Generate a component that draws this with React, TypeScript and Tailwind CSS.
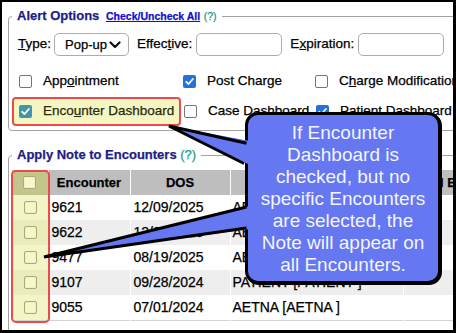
import React from "react";

function Box({ checked = false, tone = "normal" }: { checked?: boolean; tone?: "normal" | "teal" }) {
  if (checked) {
    return (
      <span
        className={`inline-flex w-[13px] h-[13px] shrink-0 items-center justify-center rounded-[2px] ${
          tone === "teal" ? "bg-[#4595a8]" : "bg-[#2273da]"
        }`}
      >
        <svg width="11" height="11" viewBox="0 0 11 11">
          <path d="M2.2 5.8 L4.5 8 L8.9 3" fill="none" stroke="#fff" strokeWidth="1.8" strokeLinecap="round" strokeLinejoin="round" />
        </svg>
      </span>
    );
  }
  return <span className="inline-block w-[13px] h-[13px] shrink-0 rounded-[2px] border border-[#767676] bg-white" />;
}

function YBox() {
  return <span className="inline-block w-[13px] h-[13px] rounded-[2px] border border-[#a9aa74] bg-[#f6f8cc] shadow-[inset_0_0_1px_#c9ca92]" />;
}

const rows = [
  { enc: "9621", dos: "12/09/2025", ins: "AETNA [AETNA ]" },
  { enc: "9622", dos: "12/08/2025", ins: "AETNA [AETNA ]" },
  { enc: "9477", dos: "08/19/2025", ins: "AETNA [AETNA ]" },
  { enc: "9107", dos: "09/28/2024", ins: "PATIENT [PATIENT ]" },
  { enc: "9055", dos: "07/01/2024", ins: "AETNA [AETNA ]" },
];

export default function App() {
  return (
    <div className="w-[456px] h-[333px] bg-black pt-[2px] pl-[2px] pr-[3px] pb-[3px]">
      <div className="relative w-full h-full bg-white overflow-hidden font-['Liberation_Sans',Arial,sans-serif] text-[13.5px] text-black">
        <div className="pt-[5px] pl-[6px] [-webkit-text-stroke:0.25px]">
          {/* Alert Options */}
          <fieldset className="w-[460px] border border-[#a3a3a3] rounded-[4px] pl-[3px] pb-[4px]">
            <legend className="ml-0 px-[5px] text-[13px] leading-[18px] whitespace-nowrap">
              <span className="font-bold text-[#1d1d86]">Alert Options</span>{" "}
              <span className="ml-[3px] text-[10.5px] font-bold text-[#1010d0] underline">Check/Uncheck All</span>{" "}
              <span className="text-[10.5px] text-[#1a9a82]">(?)</span>
            </legend>
            <div className="mt-[8px] flex items-center h-[23px] pl-[6px]">
              <span>
                <u>T</u>ype:
              </span>
              <div className="ml-[3px] w-[75px] h-[23px] rounded-[5px] border border-[#acacac] flex items-center justify-between pl-[10px] pr-[7px]">
                <span className="text-[13px]">Pop-up</span>
                <svg width="12" height="8" viewBox="0 0 12 8">
                  <path d="M1.5 1.5 L6 6 L10.5 1.5" fill="none" stroke="#111" strokeWidth="2.2" strokeLinecap="round" strokeLinejoin="round" />
                </svg>
              </div>
              <span className="ml-[8px]">
                Effec<u>t</u>ive:
              </span>
              <div className="ml-[4px] w-[86px] h-[23px] rounded-[5px] border border-[#acacac] bg-white" />
              <span className="ml-[8px]">
                E<u>x</u>piration:
              </span>
              <div className="ml-[4px] w-[86px] h-[23px] rounded-[5px] border border-[#acacac] bg-white" />
            </div>

            <div className="mt-[13px] grid grid-cols-[169px_132px_1fr] items-center">
              <div className="h-[24px] flex items-center pl-[7px]">
                <Box />
                <span className="ml-[11px]">
                  App<u>o</u>intment
                </span>
              </div>
              <div className="h-[24px] flex items-center pl-[2px]">
                <Box checked />
                <span className="ml-[11px]">Post Charge</span>
              </div>
              <div className="h-[24px] flex items-center pl-[2px] whitespace-nowrap">
                <Box />
                <span className="ml-[11px]">
                  C<u>h</u>arge Modification
                </span>
              </div>

              <div className="mt-[4px] h-[29px] flex items-center pl-[5px] border-2 border-[#ef4a4a] rounded-[4px] bg-[#f4f7c1]">
                <Box checked tone="teal" />
                <span className="ml-[11px] text-[#2a2a12] whitespace-nowrap">
                  Enco<u>u</u>nter Dashboard
                </span>
              </div>
              <div className="mt-[4px] h-[29px] flex items-center pl-[3px] whitespace-nowrap">
                <Box />
                <span className="ml-[11px]">Case Dashboard</span>
              </div>
              <div className="mt-[4px] h-[29px] flex items-center pl-[3px] whitespace-nowrap">
                <Box checked />
                <span className="ml-[11px]">Patient Dashboard</span>
              </div>
            </div>
          </fieldset>

          {/* Apply Note to Encounters */}
          <fieldset className="mt-[15px] w-[460px] border border-[#a3a3a3] rounded-[4px] pl-[3px] pb-[20px]">
            <legend className="px-[5px] text-[13px] leading-[18px] whitespace-nowrap">
              <span className="font-bold text-[#1d1d86]">Apply Note to Encounters</span>{" "}
              <span className="text-[#1a9a82]">(?)</span>
            </legend>
            <div className="relative mt-[6px]">
              <table className="table-fixed border-collapse w-[460px] text-[14px]">
                <colgroup>
                  <col className="w-[36px]" />
                  <col className="w-[82px]" />
                  <col className="w-[100px]" />
                  <col className="w-[173px]" />
                  <col />
                </colgroup>
                <thead>
                  <tr className="h-[25px] bg-[#bebebe] text-[13px] font-bold">
                    <th className="p-0 bg-[#c4c58a] text-center">
                      <div className="flex justify-center">
                        <YBox />
                      </div>
                    </th>
                    <th className="p-0 border-l border-white text-center">Encounter</th>
                    <th className="p-0 border-l border-white text-center">DOS</th>
                    <th className="p-0 border-l border-white text-center">Insurance</th>
                    <th className="p-0 pl-[10px] border-l border-white text-left whitespace-nowrap">Total Balance</th>
                  </tr>
                </thead>
                <tbody className="border-b border-[#d4d4d4]">
                  {rows.map((r, i) => (
                    <tr key={r.enc} className={`h-[25px] ${i % 2 === 1 ? "bg-[#eeeeee]" : "bg-white"}`}>
                      <td className={`p-0 ${i % 2 === 1 ? "bg-[#eaedbb]" : "bg-[#f2f5c6]"}`}>
                        <div className="flex justify-center pl-[1px]">
                          <YBox />
                        </div>
                      </td>
                      <td className="p-0 pl-[3px] border-l border-white">{r.enc}</td>
                      <td className="p-0 pl-[3px] border-l border-white">{r.dos}</td>
                      <td className="p-0 pl-[2px] border-l border-white whitespace-nowrap">{r.ins}</td>
                      <td className="p-0 border-l border-white" />
                    </tr>
                  ))}
                </tbody>
              </table>
              <div className="absolute left-[-1px] top-0 w-[39px] h-[153px] border-2 border-[#ef4a4a] rounded-[5px]" />
            </div>
          </fieldset>
        </div>

        {/* Callout */}
        <div className="absolute left-[243px] top-[110px] w-[196px] h-[172px] rounded-[13px] border-[3px] border-black bg-[#6577f1] shadow-[1px_1px_0_#000] pt-[7px] text-center text-[19px] leading-[22px] text-[#f4f5ff]">
          If Encounter
          <br />
          Dashboard is
          <br />
          checked, but no
          <br />
          specific Encounters
          <br />
          are selected, the
          <br />
          Note will appear on
          <br />
          all Encounters.
        </div>
        <svg className="absolute left-0 top-0 pointer-events-none" width="452" height="328" viewBox="0 0 452 328">
          <polygon points="167,124 248,139 248,163" fill="#6577f1" />
          <polyline points="244.5,141.3 167,124 242,161.5" fill="none" stroke="#000" strokeWidth="3" strokeLinejoin="miter" />
          <polygon points="42,255 248,204 248,227" fill="#6577f1" />
          <polyline points="244.5,205 42,255 244.5,226" fill="none" stroke="#000" strokeWidth="3" strokeLinejoin="miter" />
        </svg>
      </div>
    </div>
  );
}
